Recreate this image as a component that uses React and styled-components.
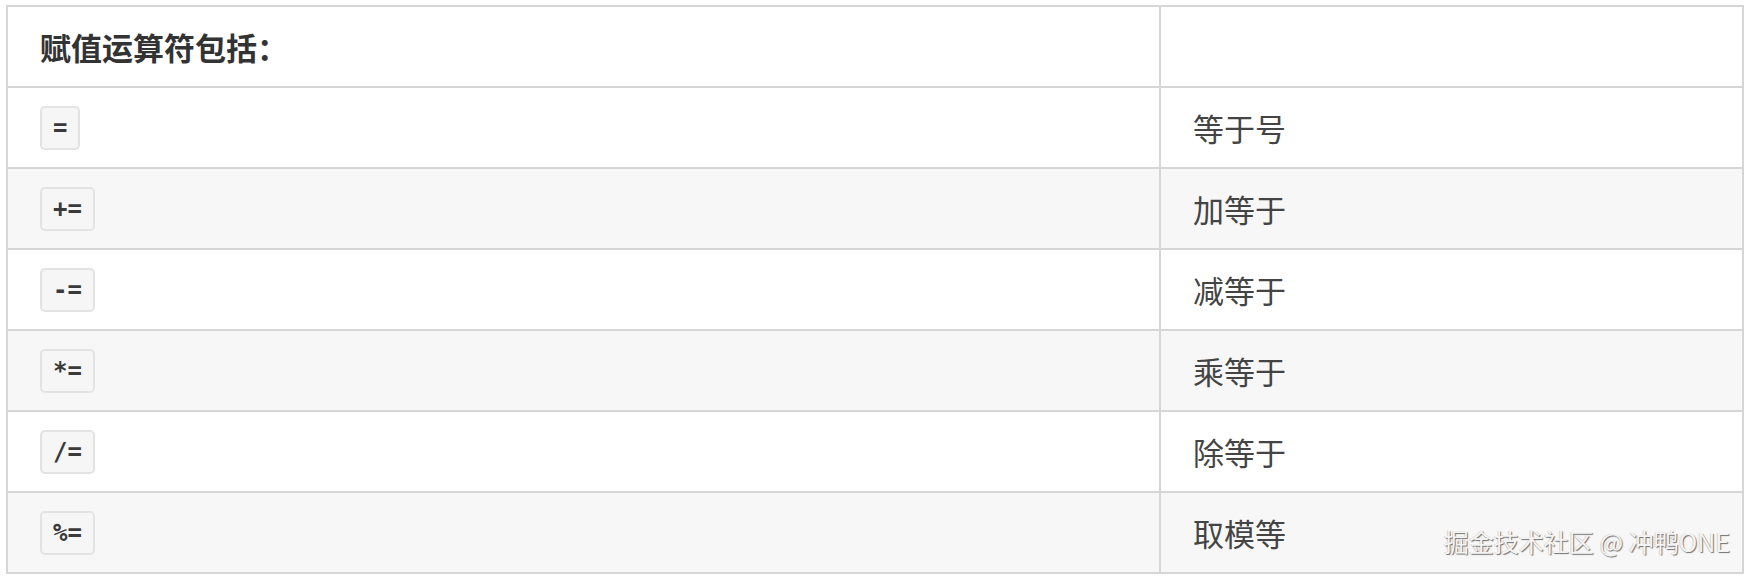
import React from 'react';
import styled, { createGlobalStyle } from 'styled-components';

const GlobalStyle = createGlobalStyle`
  html, body {
    margin: 0;
    padding: 0;
    background: #ffffff;
  }
  body {
    font-family: 'Noto Sans CJK SC', 'Noto Sans', sans-serif;
  }
`;

const Page = styled.div`
  position: relative;
  width: 1749px;
  height: 576px;
  padding: 5px 5px 0 6px;
  box-sizing: border-box;
  overflow: hidden;
`;

const Table = styled.table`
  width: 1738px;
  table-layout: fixed;
  border-collapse: collapse;
  border: 2px solid #d6d6d6;
`;

const Row = styled.tr`
  background: ${(props) => (props.striped ? '#f7f7f7' : '#ffffff')};
`;

const Cell = styled.td`
  height: 79px;
  padding: 0 0 0 32px;
  border: 2px solid #d6d6d6;
  vertical-align: middle;
  font-size: 31px;
  line-height: 1.2;
  color: ${(props) => (props.head ? '#333333' : '#444444')};
  font-weight: ${(props) => (props.head ? 700 : 400)};
`;

const Code = styled.code`
  display: inline-flex;
  align-items: center;
  height: 40px;
  padding: 0 11px;
  box-sizing: content-box;
  border: 2px solid #e3e3e3;
  border-radius: 5px;
  background: #f6f6f6;
  font-family: 'DejaVu Sans Mono', 'Liberation Mono', monospace;
  font-weight: 700;
  font-size: 24px;
  color: #3a3a3a;
  vertical-align: middle;
`;

const Watermark = styled.div`
  position: absolute;
  right: 19px;
  bottom: 17px;
  font-family: 'Noto Sans CJK SC', 'Noto Sans', sans-serif;
  font-size: 25px;
  color: #f4f4f4;
  text-shadow: 1px 1px 1px rgba(0, 0, 0, 0.55), -1px 0 0 rgba(0, 0, 0, 0.15);
  white-space: nowrap;
`;

const rows = [
  { op: '=', desc: '等于号' },
  { op: '+=', desc: '加等于' },
  { op: '-=', desc: '减等于' },
  { op: '*=', desc: '乘等于' },
  { op: '/=', desc: '除等于' },
  { op: '%=', desc: '取模等' },
];

const App = () => (
  <Page>
    <GlobalStyle />
    <Table>
      <colgroup>
        <col style={{ width: '1153px' }} />
        <col />
      </colgroup>
      <tbody>
        <Row>
          <Cell head>赋值运算符包括：</Cell>
          <Cell />
        </Row>
        {rows.map((r, i) => (
          <Row key={r.op} striped={i % 2 === 1}>
            <Cell>
              <Code>{r.op}</Code>
            </Cell>
            <Cell>{r.desc}</Cell>
          </Row>
        ))}
      </tbody>
    </Table>
    <Watermark>掘金技术社区 @ 冲鸭ONE</Watermark>
  </Page>
);

export default App;
